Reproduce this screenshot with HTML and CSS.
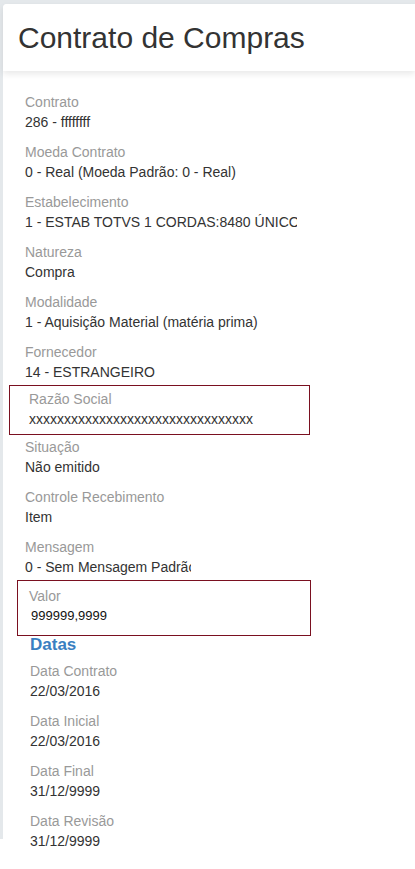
FILE: index.html
```html
<!DOCTYPE html>
<html lang="pt-BR">
<head>
<meta charset="utf-8">
<title>Contrato de Compras</title>
<link rel="stylesheet" href="styles.css">
</head>
<body>
<div class="page">
  <div class="card">
    <header class="header">
      <h1 class="title">Contrato de Compras</h1>
    </header>
    <div class="content">
      <div class="field">
        <div class="label">Contrato</div>
        <div class="value">286 - ffffffff</div>
      </div>
      <div class="field">
        <div class="label">Moeda Contrato</div>
        <div class="value">0 - Real (Moeda Padrão: 0 - Real)</div>
      </div>
      <div class="field">
        <div class="label">Estabelecimento</div>
        <div class="value clip-wide">1 - ESTAB TOTVS 1 CORDAS:8480 ÚNICO</div>
      </div>
      <div class="field">
        <div class="label">Natureza</div>
        <div class="value">Compra</div>
      </div>
      <div class="field">
        <div class="label">Modalidade</div>
        <div class="value">1 - Aquisição Material (matéria prima)</div>
      </div>
      <div class="field">
        <div class="label">Fornecedor</div>
        <div class="value">14 - ESTRANGEIRO</div>
      </div>
      <div class="field boxed boxed-social">
        <div class="label">Razão Social</div>
        <div class="value">xxxxxxxxxxxxxxxxxxxxxxxxxxxxxxxx</div>
      </div>
      <div class="field">
        <div class="label">Situação</div>
        <div class="value">Não emitido</div>
      </div>
      <div class="field">
        <div class="label">Controle Recebimento</div>
        <div class="value">Item</div>
      </div>
      <div class="field">
        <div class="label">Mensagem</div>
        <div class="value clip-narrow">0 - Sem Mensagem Padrão</div>
      </div>
      <div class="field boxed boxed-valor">
        <div class="label">Valor</div>
        <div class="value value-input">999999,9999</div>
      </div>
      <section class="dates">
        <h2 class="section-title">Datas</h2>
        <div class="field">
          <div class="label">Data Contrato</div>
          <div class="value">22/03/2016</div>
        </div>
        <div class="field">
          <div class="label">Data Inicial</div>
          <div class="value">22/03/2016</div>
        </div>
        <div class="field">
          <div class="label">Data Final</div>
          <div class="value">31/12/9999</div>
        </div>
        <div class="field">
          <div class="label">Data Revisão</div>
          <div class="value">31/12/9999</div>
        </div>
      </section>
    </div>
  </div>
</div>
</body>
</html>
```

FILE: styles.css
```css
* {
  box-sizing: border-box;
}

html, body {
  margin: 0;
  padding: 0;
  background: #ffffff;
}

body {
  font-family: "Liberation Sans", Arial, Helvetica, sans-serif;
  color: #333333;
}

.page {
  background: linear-gradient(#e4e8eb, #e4e8eb) no-repeat left top / 100% 839px;
  padding: 4px 0 0 3px;
}

.card {
  background: linear-gradient(#ffffff, #ffffff) no-repeat left top / 100% 835px;
  border-top-left-radius: 4px;
  padding-bottom: 10px;
}

.header {
  height: 67px;
  padding: 0 0 0 15px;
  display: flex;
  align-items: center;
  background: #ffffff;
  box-shadow: 0 3px 6px rgba(0, 0, 0, 0.09);
  border-top-left-radius: 4px;
  position: relative;
}

.title {
  margin: 0;
  font-weight: normal;
  font-size: 30px;
  line-height: 34px;
  color: #333333;
}

.content {
  padding: 21px 0 0 22px;
}

.field {
  margin-bottom: 10px;
}

.label {
  font-size: 14px;
  line-height: 20px;
  color: #999999;
  white-space: nowrap;
}

.value {
  font-size: 14px;
  line-height: 20px;
  color: #333333;
  white-space: nowrap;
}

.clip-wide {
  width: 272px;
  overflow: hidden;
}

.clip-narrow {
  width: 166px;
  overflow: hidden;
}

.boxed {
  border: 1px solid #7a1020;
}

.boxed-social {
  margin: -7px 0 2px -16px;
  width: 301px;
  padding: 3px 0 5px 19px;
}

.boxed-valor {
  margin: -7px 0 0 -8px;
  width: 294px;
  padding: 5px 0 10px 11px;
}

.value-input {
  padding-left: 2px;
  line-height: 19px;
  font-size: 13px;
  color: #111111;
}

.dates {
  padding-left: 5px;
}

.section-title {
  margin: 0 0 7px 0;
  font-size: 17px;
  line-height: 18px;
  font-weight: bold;
  color: #3a7fc1;
}
```
